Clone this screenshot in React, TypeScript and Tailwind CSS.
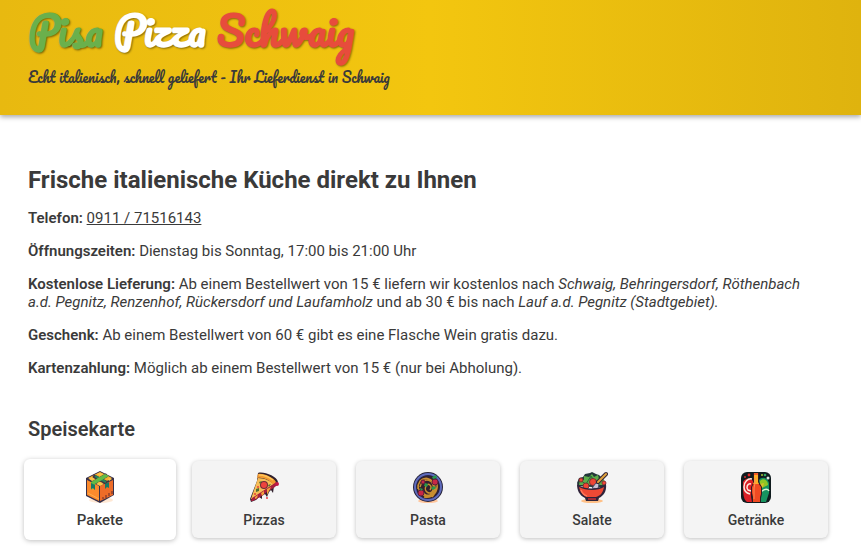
import type { ReactNode } from "react";

function PackageIcon() {
  return (
    <svg viewBox="0 0 32 32" className="size-8" aria-hidden="true">
      <ellipse cx="17" cy="29" rx="12" ry="3" fill="#ffd9b8" opacity=".6" />
      <path d="M16 0 30 7v17L16 32 2 25V7Z" fill="#38304a" />
      <path d="M16 1 28 7 16 14 4 7Z" fill="#f7ad30" />
      <path d="M3 9 15 15v15L3 24Z" fill="#fb8a2c" />
      <path d="M16 15 29 9v15L16 30Z" fill="#ee6c28" />
      <path d="m9 5 14 7M23 4 9 12" stroke="#453440" strokeWidth="4" />
      <path d="m11 5 11 6" stroke="#23845c" strokeWidth="2" />
      <path d="M7 11 21 3l4 2-14 8v6l-2-2-2 2Z" fill="#62bb45" />
      <path d="m7 12 4 2v5l-2-2-2 1ZM21 13l4-2v6l-2-1-2 2Z" fill="#167a66" />
      <path d="m12 13 4-2 4 2-4 2ZM13 3l3-1 3 1-3 2ZM5 8l3-2 3 2-3 2ZM24 8l2-1 2 1-3 2Z" fill="#fac44b" />
      <path d="M19 26v2M22 24v3M25 22v3M28 20v3" stroke="#632a2e" strokeWidth="1" />
      <path d="M4 22 15 28" stroke="#ffad4b" />
    </svg>
  );
}

function PizzaIcon() {
  return (
    <svg viewBox="0 0 32 32" className="size-8" aria-hidden="true">
      <path d="M10 2c5-2 19 3 20 9 0 3-2 5-4 4l-1 7-2-3-2 2-2 5-2-3-3 2v3l-3-2-3 3-5 2-1-3L9 10Z" fill="#30202d" />
      <path d="M10 7c7 0 12 3 16 6L5 28H3Z" fill="#f6bd58" />
      <path d="M10 3c6-1 16 4 18 8l-2 3C21 9 16 6 9 7Z" fill="#f39a30" />
      <path d="M11 4c5 0 10 2 14 5" fill="none" stroke="#ffc65a" strokeWidth="1.5" />
      <path d="M4 27 24 14l3-2 2 1-2 3-8 5-7 5-7 4H3Z" fill="#a81f3e" />
      <path d="m13 22 3-2v3l-2 2ZM19 18l4-2-2 4-2 4ZM7 26l3-2-1 3-2 1Z" fill="#f6a33d" />
      <circle cx="16" cy="14" r="4" fill="#6e2938" />
      <circle cx="16" cy="14" r="3" fill="#ed433e" />
      <circle cx="29" cy="13" r="2" fill="#c41848" />
      <path d="m11 11 3-1-2 3ZM8 18l3-1v3l-3 1ZM20 14l3-1-2 3Z" fill="#50702f" />
      <circle cx="10" cy="16" r="1" fill="#eb403b" />
      <circle cx="7" cy="23" r="1" fill="#e74432" />
      <circle cx="19" cy="27" r="1" fill="#ed3c45" />
    </svg>
  );
}

function PastaIcon() {
  return (
    <svg viewBox="0 0 32 32" className="size-8" aria-hidden="true">
      <ellipse cx="16" cy="30" rx="10" ry="2" fill="#ffc69d" />
      <circle cx="16" cy="16" r="15" fill="#252238" />
      <circle cx="16" cy="16" r="13" fill="#292543" stroke="#5f6bbd" strokeWidth="2" />
      <circle cx="16" cy="16" r="11" fill="#33202d" />
      <g fill="none" stroke="#c98f30" strokeWidth="1.5">
        <path d="M6 18C5 5 21 4 22 15s-10 12-12 4M8 10c10-9 21 7 12 16M9 23c7 5 15 1 16-7M8 16c3-12 16-7 13 3-2 6-10 2-7-4 2-4 7 0 4 4M6 14c0 10 11 13 14 8M12 26c10 2 14-7 13-13" />
      </g>
      <g fill="#c92845" stroke="#601f3b">
        <circle cx="11" cy="11" r="2" />
        <circle cx="23" cy="11" r="3" />
        <circle cx="9" cy="22" r="3" />
      </g>
      <path d="m20 6 4-2 1 3-4 1ZM13 12l3 1-1 3-3-1ZM19 17l3-2 2 2-3 2ZM8 17l3 1-2 2Z" fill="#28994b" />
    </svg>
  );
}

function SaladIcon() {
  return (
    <svg viewBox="0 0 32 32" className="size-8" aria-hidden="true">
      <ellipse cx="16" cy="30" rx="11" ry="2" fill="#ffc087" />
      <path d="M2 15 1 12l2-5 4-1 2-3 5-1 2-1 4 2 3 1 2 2 3 3 2 5v3Z" fill="#24383a" />
      <path d="m3 14 1-6 4 1V5l5 1 3-3 2 3 4-2 1 4 5 1v5Z" fill="#5dad4a" />
      <path d="m5 10 5 3 5-8 4 6 5-3M15 6v5" stroke="#286b3c" fill="none" />
      <g fill="#ef4634" stroke="#74252e" strokeWidth=".8">
        <circle cx="5" cy="9" r="2" />
        <circle cx="10" cy="15" r="3" />
        <circle cx="17" cy="11" r="3.5" />
        <circle cx="28" cy="12" r="2" />
      </g>
      <path d="m16 17 4-5 3 1-1 5Z" fill="#c9c3d2" stroke="#504b68" />
      <path d="m22 11 8-8" stroke="#352536" strokeWidth="4" strokeLinecap="round" />
      <path d="m22 11 8-8" stroke="#e1a43c" strokeWidth="2" strokeLinecap="round" />
      <path d="M1 13c7 6 22 6 29 0 1 8-3 12-7 14l-1 3H10l-1-3C3 24 1 19 1 13Z" fill="#30233a" />
      <path d="M3 16c7 4 19 4 25 0-1 6-4 9-8 10h-9C6 24 4 20 3 16Z" fill="#ef4935" />
      <path d="M5 19c1 3 3 5 6 6" stroke="#ff775b" strokeWidth="1.5" fill="none" />
      <path d="M12 28h8" stroke="#c92f36" strokeWidth="1.5" />
    </svg>
  );
}

function DrinksIcon() {
  return (
    <svg viewBox="0 0 32 32" className="size-8" aria-hidden="true">
      <rect x="1" y="1" width="30" height="31" rx="6" fill="#101b1e" />
      <path d="M3 11c2-4 7-5 10-1v21H7c-4-3-4-9-4-20Z" fill="#dc2027" />
      <path d="M12 8c-4-1-8 3-8 8 0 3 2 6 6 7M11 13c-4-1-5 4-3 6l3 1" fill="none" stroke="#ffe9de" strokeWidth="1.5" />
      <path d="M19 9c3-4 9-2 10 3v10l-3 9h-6Z" fill="#179460" />
      <path d="M20 10c3-4 8-1 8 4l-8 4Z" fill="#91c624" />
      <path d="M21 21c4-4 7-3 8-1" fill="none" stroke="#dbf3d4" strokeWidth="1.5" />
      <path d="m20 13 4-1-1 4-3 1Z" fill="#d7bf2a" />
      <path d="M13 2h6v9l3 5v7l-1 4v4h-9l-1-5V16l2-4Z" fill="#301c22" />
      <path d="M14 3h4v9l3 4v7l-1 3v5h-7v-5l-1-4v-6l2-4Z" fill="#f04a22" />
      <path d="M14 3h4v8l1 2h-6l1-2Z" fill="#ffad27" />
      <path d="M15 7v5l-1 5v11" stroke="#ff8d55" strokeWidth="1" fill="none" />
      <path d="M14 2h4v2h-4Z" fill="#f25b26" />
      <circle cx="5" cy="6" r="1" fill="#da2d30" />
      <circle cx="9" cy="4" r="1.4" fill="#e22728" />
      <circle cx="22" cy="4" r="1" fill="#a8c734" />
      <circle cx="25" cy="4" r="1.3" fill="#31a861" />
      <circle cx="28" cy="7" r="1.5" fill="#dceee3" />
    </svg>
  );
}

const categories: { name: string; icon: ReactNode }[] = [
  { name: "Pakete", icon: <PackageIcon /> },
  { name: "Pizzas", icon: <PizzaIcon /> },
  { name: "Pasta", icon: <PastaIcon /> },
  { name: "Salate", icon: <SaladIcon /> },
  { name: "Getränke", icon: <DrinksIcon /> },
];

export default function App() {
  return (
    <div className="min-h-screen bg-white font-['Roboto',sans-serif] text-[15px] leading-[18px] text-[#3a3a3a]">
      <header className="bg-linear-to-r from-[#e8b910] via-[#f3c60f] to-[#dfb30e] px-7 pt-1 pb-6 shadow-[0_2px_5px_rgba(0,0,0,0.35)]">
        <h1 className="font-['Pacifico',cursive] text-[40px] leading-[52px] font-bold whitespace-nowrap [text-shadow:1px_1px_2px_rgba(0,0,0,0.45)]">
          <span className="text-[#6ab04c]">Pisa</span>{" "}
          <span className="text-white">Pizza</span>{" "}
          <span className="text-[#e74c3c]">Schwaig</span>
        </h1>
        <p className="pt-2.5 pb-0.5 font-['Pacifico',cursive] text-sm leading-[23px]">
          Echt italienisch, schnell geliefert - Ihr Lieferdienst in Schwaig
        </p>
      </header>

      <main className="pt-[51px] pr-[33px] pb-2 pl-7">
        <section>
          <h2 className="text-2xl leading-7 font-bold">Frische italienische Küche direkt zu Ihnen</h2>
          <div className="flex flex-col gap-[15px] pt-[15px]">
            <p><strong className="font-semibold">Telefon:</strong> <a href="tel:091171516143" className="underline">0911 / 71516143</a></p>
            <p><strong className="font-semibold">Öffnungszeiten:</strong> Dienstag bis Sonntag, 17:00 bis 21:00 Uhr</p>
            <p>
              <strong className="font-semibold">Kostenlose Lieferung:</strong> Ab einem Bestellwert von 15 € liefern wir kostenlos nach{" "}
              <em>Schwaig, Behringersdorf, Röthenbach <span className="whitespace-nowrap">a.d. Pegnitz,</span> Renzenhof, Rückersdorf und Laufamholz</em>{" "}
              und ab 30 € bis nach <em>Lauf a.d. Pegnitz (Stadtgebiet).</em>
            </p>
            <p><strong className="font-semibold">Geschenk:</strong> Ab einem Bestellwert von 60 € gibt es eine Flasche Wein gratis dazu.</p>
            <p><strong className="font-semibold">Kartenzahlung:</strong> Möglich ab einem Bestellwert von 15 € (nur bei Abholung).</p>
          </div>
        </section>

        <section className="pt-10">
          <h2 className="text-xl leading-6 font-semibold">Speisekarte</h2>
          <nav aria-label="Speisekarte" className="grid grid-cols-5 items-center gap-5 pt-5">
            {categories.map(({ name, icon }, index) => (
              <button
                key={name}
                type="button"
                className={
                  index === 0
                    ? "-mx-1 -my-0.5 flex h-[81px] cursor-pointer flex-col items-center justify-center gap-2 rounded-md bg-white text-[15px] leading-[18px] font-medium shadow-[0_1px_5px_rgba(0,0,0,0.25)]"
                    : "flex h-[77px] cursor-pointer flex-col items-center justify-center gap-2 rounded-md bg-[#f4f4f4] text-sm leading-[18px] font-medium shadow-[0_1px_4px_rgba(0,0,0,0.25)]"
                }
              >
                {icon}
                <span>{name}</span>
              </button>
            ))}
          </nav>
        </section>
      </main>
    </div>
  );
}
